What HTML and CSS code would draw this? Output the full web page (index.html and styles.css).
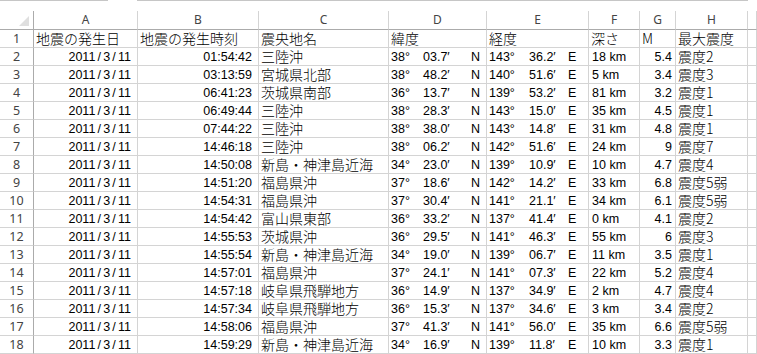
FILE: index.html
```html
<!DOCTYPE html>
<html lang="ja">
<head>
<meta charset="utf-8">
<link rel="stylesheet" href="styles.css">
</head>
<body>
<div class="topbar"><div class="seg seg1"></div><div class="gap"></div><div class="seg seg2"></div></div>
<div class="sheet">
  <div class="corner"><div class="tri"></div></div>
  <div class="ch">A</div><div class="ch">B</div><div class="ch">C</div><div class="ch">D</div><div class="ch">E</div><div class="ch">F</div><div class="ch">G</div><div class="ch">H</div><div class="ch"></div>

  <div class="rh">1</div><div class="c jp">地震の発生日</div><div class="c jp">地震の発生時刻</div><div class="c jp">震央地名</div><div class="c jp">緯度</div><div class="c jp">経度</div><div class="c jp">深さ</div><div class="c jp">M</div><div class="c jp">最大震度</div><div class="c"></div>

  <div class="rh">2</div><div class="c num">2011<span class="sl">/</span>3<span class="sl">/</span>11</div><div class="c num">01:54:42</div><div class="c jp">三陸沖</div><div class="c geo lat"><span class="dg">38°</span><span class="mn">03.7′</span>N</div><div class="c geo lon"><span class="dg">143°</span><span class="mn">36.2′</span>E</div><div class="c num-l">18 km</div><div class="c num m">5.4</div><div class="c jp">震度2</div><div class="c"></div>

  <div class="rh">3</div><div class="c num">2011<span class="sl">/</span>3<span class="sl">/</span>11</div><div class="c num">03:13:59</div><div class="c jp">宮城県北部</div><div class="c geo lat"><span class="dg">38°</span><span class="mn">48.2′</span>N</div><div class="c geo lon"><span class="dg">140°</span><span class="mn">51.6′</span>E</div><div class="c num-l">5 km</div><div class="c num m">3.4</div><div class="c jp">震度3</div><div class="c"></div>

  <div class="rh">4</div><div class="c num">2011<span class="sl">/</span>3<span class="sl">/</span>11</div><div class="c num">06:41:23</div><div class="c jp">茨城県南部</div><div class="c geo lat"><span class="dg">36°</span><span class="mn">13.7′</span>N</div><div class="c geo lon"><span class="dg">139°</span><span class="mn">53.2′</span>E</div><div class="c num-l">81 km</div><div class="c num m">3.2</div><div class="c jp">震度1</div><div class="c"></div>

  <div class="rh">5</div><div class="c num">2011<span class="sl">/</span>3<span class="sl">/</span>11</div><div class="c num">06:49:44</div><div class="c jp">三陸沖</div><div class="c geo lat"><span class="dg">38°</span><span class="mn">28.3′</span>N</div><div class="c geo lon"><span class="dg">143°</span><span class="mn">15.0′</span>E</div><div class="c num-l">35 km</div><div class="c num m">4.5</div><div class="c jp">震度1</div><div class="c"></div>

  <div class="rh">6</div><div class="c num">2011<span class="sl">/</span>3<span class="sl">/</span>11</div><div class="c num">07:44:22</div><div class="c jp">三陸沖</div><div class="c geo lat"><span class="dg">38°</span><span class="mn">38.0′</span>N</div><div class="c geo lon"><span class="dg">143°</span><span class="mn">14.8′</span>E</div><div class="c num-l">31 km</div><div class="c num m">4.8</div><div class="c jp">震度1</div><div class="c"></div>

  <div class="rh">7</div><div class="c num">2011<span class="sl">/</span>3<span class="sl">/</span>11</div><div class="c num">14:46:18</div><div class="c jp">三陸沖</div><div class="c geo lat"><span class="dg">38°</span><span class="mn">06.2′</span>N</div><div class="c geo lon"><span class="dg">142°</span><span class="mn">51.6′</span>E</div><div class="c num-l">24 km</div><div class="c num m">9</div><div class="c jp">震度7</div><div class="c"></div>

  <div class="rh">8</div><div class="c num">2011<span class="sl">/</span>3<span class="sl">/</span>11</div><div class="c num">14:50:08</div><div class="c jp">新島・神津島近海</div><div class="c geo lat"><span class="dg">34°</span><span class="mn">23.0′</span>N</div><div class="c geo lon"><span class="dg">139°</span><span class="mn">10.9′</span>E</div><div class="c num-l">10 km</div><div class="c num m">4.7</div><div class="c jp">震度4</div><div class="c"></div>

  <div class="rh">9</div><div class="c num">2011<span class="sl">/</span>3<span class="sl">/</span>11</div><div class="c num">14:51:20</div><div class="c jp">福島県沖</div><div class="c geo lat"><span class="dg">37°</span><span class="mn">18.6′</span>N</div><div class="c geo lon"><span class="dg">142°</span><span class="mn">14.2′</span>E</div><div class="c num-l">33 km</div><div class="c num m">6.8</div><div class="c jp">震度5弱</div><div class="c"></div>

  <div class="rh">10</div><div class="c num">2011<span class="sl">/</span>3<span class="sl">/</span>11</div><div class="c num">14:54:31</div><div class="c jp">福島県沖</div><div class="c geo lat"><span class="dg">37°</span><span class="mn">30.4′</span>N</div><div class="c geo lon"><span class="dg">141°</span><span class="mn">21.1′</span>E</div><div class="c num-l">34 km</div><div class="c num m">6.1</div><div class="c jp">震度5弱</div><div class="c"></div>

  <div class="rh">11</div><div class="c num">2011<span class="sl">/</span>3<span class="sl">/</span>11</div><div class="c num">14:54:42</div><div class="c jp">富山県東部</div><div class="c geo lat"><span class="dg">36°</span><span class="mn">33.2′</span>N</div><div class="c geo lon"><span class="dg">137°</span><span class="mn">41.4′</span>E</div><div class="c num-l">0 km</div><div class="c num m">4.1</div><div class="c jp">震度2</div><div class="c"></div>

  <div class="rh">12</div><div class="c num">2011<span class="sl">/</span>3<span class="sl">/</span>11</div><div class="c num">14:55:53</div><div class="c jp">茨城県沖</div><div class="c geo lat"><span class="dg">36°</span><span class="mn">29.5′</span>N</div><div class="c geo lon"><span class="dg">141°</span><span class="mn">46.3′</span>E</div><div class="c num-l">55 km</div><div class="c num m">6</div><div class="c jp">震度3</div><div class="c"></div>

  <div class="rh">13</div><div class="c num">2011<span class="sl">/</span>3<span class="sl">/</span>11</div><div class="c num">14:55:54</div><div class="c jp">新島・神津島近海</div><div class="c geo lat"><span class="dg">34°</span><span class="mn">19.0′</span>N</div><div class="c geo lon"><span class="dg">139°</span><span class="mn">06.7′</span>E</div><div class="c num-l">11 km</div><div class="c num m">3.5</div><div class="c jp">震度1</div><div class="c"></div>

  <div class="rh">14</div><div class="c num">2011<span class="sl">/</span>3<span class="sl">/</span>11</div><div class="c num">14:57:01</div><div class="c jp">福島県沖</div><div class="c geo lat"><span class="dg">37°</span><span class="mn">24.1′</span>N</div><div class="c geo lon"><span class="dg">141°</span><span class="mn">07.3′</span>E</div><div class="c num-l">22 km</div><div class="c num m">5.2</div><div class="c jp">震度4</div><div class="c"></div>

  <div class="rh">15</div><div class="c num">2011<span class="sl">/</span>3<span class="sl">/</span>11</div><div class="c num">14:57:18</div><div class="c jp">岐阜県飛騨地方</div><div class="c geo lat"><span class="dg">36°</span><span class="mn">14.9′</span>N</div><div class="c geo lon"><span class="dg">137°</span><span class="mn">34.9′</span>E</div><div class="c num-l">2 km</div><div class="c num m">4.7</div><div class="c jp">震度4</div><div class="c"></div>

  <div class="rh">16</div><div class="c num">2011<span class="sl">/</span>3<span class="sl">/</span>11</div><div class="c num">14:57:34</div><div class="c jp">岐阜県飛騨地方</div><div class="c geo lat"><span class="dg">36°</span><span class="mn">15.3′</span>N</div><div class="c geo lon"><span class="dg">137°</span><span class="mn">34.6′</span>E</div><div class="c num-l">3 km</div><div class="c num m">3.4</div><div class="c jp">震度2</div><div class="c"></div>

  <div class="rh">17</div><div class="c num">2011<span class="sl">/</span>3<span class="sl">/</span>11</div><div class="c num">14:58:06</div><div class="c jp">福島県沖</div><div class="c geo lat"><span class="dg">37°</span><span class="mn">41.3′</span>N</div><div class="c geo lon"><span class="dg">141°</span><span class="mn">56.0′</span>E</div><div class="c num-l">35 km</div><div class="c num m">6.6</div><div class="c jp">震度5弱</div><div class="c"></div>

  <div class="rh">18</div><div class="c num">2011<span class="sl">/</span>3<span class="sl">/</span>11</div><div class="c num">14:59:29</div><div class="c jp">新島・神津島近海</div><div class="c geo lat"><span class="dg">34°</span><span class="mn">16.9′</span>N</div><div class="c geo lon"><span class="dg">139°</span><span class="mn">11.8′</span>E</div><div class="c num-l">10 km</div><div class="c num m">3.3</div><div class="c jp">震度1</div><div class="c"></div>
</div>
</body>
</html>
```
FILE: styles.css
```css
html, body {
  margin: 0;
  padding: 0;
  background: #ffffff;
  overflow: hidden;
}

.topbar {
  display: flex;
  height: 11px;
  box-sizing: border-box;
}
.seg {
  height: 1px;
  background: #c6c6c6;
}
.seg1 { width: 108px; }
.gap { width: 29px; }
.seg2 { width: 611px; }

.sheet {
  display: grid;
  grid-template-columns: 34px 104px 121px 130px 98px 102px 51px 36px 72px 1fr;
  grid-auto-rows: 18px;
  grid-template-rows: 19px;
  font-family: "Liberation Sans", "Noto Sans CJK JP", sans-serif;
  color: #000;
}

.corner {
  position: relative;
  border-right: 1px solid #ababab;
  border-bottom: 1px solid #ababab;
  box-sizing: border-box;
}
.tri {
  position: absolute;
  right: 4px;
  bottom: 3px;
  width: 0;
  height: 0;
  border-left: 10px solid transparent;
  border-bottom: 10px solid #dfdfdf;
}

.ch {
  box-sizing: border-box;
  border-right: 1px solid #d4d4d4;
  border-bottom: 1px solid #ababab;
  font-family: "Noto Sans", "Liberation Sans", sans-serif;
  font-size: 12px;
  color: #444;
  text-align: center;
  line-height: 18px;
}

.rh {
  box-sizing: border-box;
  border-right: 1px solid #ababab;
  border-bottom: 1px solid #d4d4d4;
  font-family: "Noto Sans", "Liberation Sans", sans-serif;
  font-size: 12.5px;
  color: #444;
  text-align: center;
  line-height: 18px;
}

.c {
  box-sizing: border-box;
  border-right: 1px solid #d4d4d4;
  border-bottom: 1px solid #d4d4d4;
  white-space: nowrap;
  display: flex;
  align-items: center;
}

.jp {
  font-family: "Noto Sans CJK JP", sans-serif;
  font-size: 14px;
  font-weight: 300;
  line-height: 17px;
  padding-left: 2px;
}

.num, .num-l, .geo {
  font-family: "Liberation Sans", "Noto Sans CJK JP", sans-serif;
  font-size: 12.5px;
  line-height: 15px;
  padding-top: 2px;
}

.num {
  justify-content: flex-end;
  padding-right: 6px;
}
.num.m {
  padding-right: 3px;
}

.sl {
  padding: 0 2.2px;
}

.num-l {
  padding-left: 3px;
}

.geo {
  padding-left: 2px;
}

.dg, .mn {
  display: inline-block;
}
.lat .dg { width: 32px; }
.lat .mn { width: 48px; }
.lon .dg { width: 40px; }
.lon .mn { width: 39px; }
```
